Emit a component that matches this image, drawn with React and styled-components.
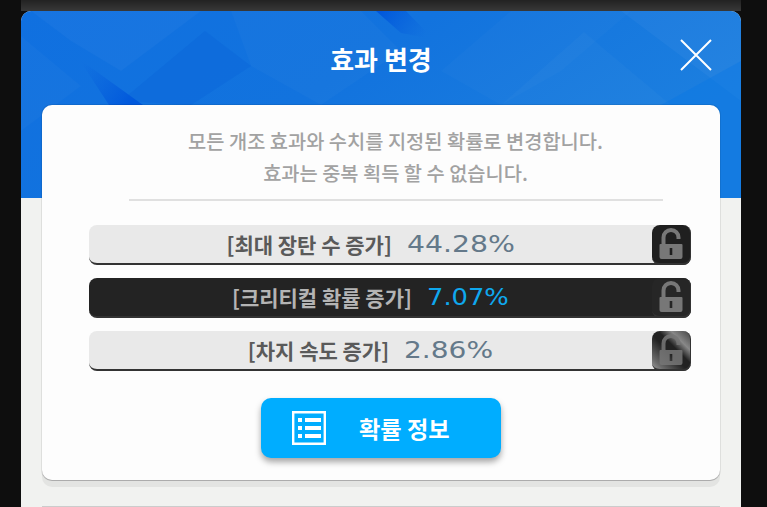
import React from 'react';
import styled, { createGlobalStyle } from 'styled-components';

const rows = [
  { id: 1, label: '[최대 장탄 수 증가]', value: '44.28%', stretch: 1.23, pad: 20 },
  { id: 2, label: '[크리티컬 확률 증가]', value: '7.07%', stretch: 1.12, pad: 9, dark: true },
  { id: 3, label: '[차지 속도 증가]', value: '2.86%', stretch: 1.22, pad: 16, shine: true },
];

function LockIcon() {
  return (
    <svg width="26" height="32" viewBox="0 0 26 32">
      <path d="M5.5 16V9.5a7.5 7.5 0 0 1 15 0v1.5" fill="none" stroke="#777" strokeWidth="4" />
      <path fillRule="evenodd" fill="#777" d="M2.5 16h21a1 1 0 0 1 1 1v12a2 2 0 0 1-2 2h-19a2 2 0 0 1-2-2V17a1 1 0 0 1 1-1zM11.7 20v7h2.6v-7z" />
    </svg>
  );
}

function ListIcon() {
  return (
    <svg width="36" height="36" viewBox="0 0 36 36" fill="#fff">
      <path fillRule="evenodd" d="M1 1h34v34H1zM3.4 3.4v29.2h29.2V3.4z" />
      <rect x="7" y="8" width="4" height="4" />
      <rect x="14" y="8" width="16" height="4" />
      <rect x="7" y="16" width="4" height="4" />
      <rect x="14" y="16" width="16" height="4" />
      <rect x="7" y="24" width="4" height="4" />
      <rect x="14" y="24" width="16" height="4" />
    </svg>
  );
}

function HeaderArt() {
  return (
    <ArtSvg width="720" height="187" viewBox="0 0 720 187">
      <defs>
        <linearGradient id="base" x1="0" y1="0" x2="1" y2="0.4">
          <stop offset="0" stopColor="#1070e0" />
          <stop offset="0.5" stopColor="#1273de" />
          <stop offset="1" stopColor="#1c7fdf" />
        </linearGradient>
        <linearGradient id="streakLeft" gradientUnits="userSpaceOnUse" x1="62" y1="50" x2="112" y2="90">
          <stop offset="0" stopColor="#0a62dc" stopOpacity="0" />
          <stop offset="1" stopColor="#0058dc" />
        </linearGradient>
        <linearGradient id="streakTop" gradientUnits="userSpaceOnUse" x1="400" y1="30" x2="360" y2="0">
          <stop offset="0" stopColor="#0a62dc" stopOpacity="0" />
          <stop offset="1" stopColor="#0058dc" />
        </linearGradient>
      </defs>
      <rect width="720" height="187" fill="url(#base)" />
      <polygon points="10,0 180,0 100,60 50,30" fill="#fff" opacity="0.03" />
      <polygon points="0,25 60,75 0,120" fill="#fff" opacity="0.025" />
      <polygon points="100,90 184,20 230,55 170,94" fill="#0a66da" opacity="0.45" />
      <polygon points="210,0 340,0 380,40 300,94 230,55" fill="#fff" opacity="0.025" />
      <polygon points="58,48 122,94 88,94" fill="url(#streakLeft)" />
      <polygon points="355,0 385,0 412,28 380,22" fill="url(#streakTop)" />
      <polygon points="420,60 490,0 610,0 540,60 480,94" fill="#fff" opacity="0.02" />
      <polygon points="480,94 563,21 650,94" fill="#fff" opacity="0.025" />
      <polygon points="600,0 720,0 720,90" fill="#fff" opacity="0.035" />
      <polygon points="640,94 720,50 720,187 700,187" fill="#0a78e4" opacity="0.45" />
    </ArtSvg>
  );
}

function App() {
  return (
    <>
      <GlobalStyle />
      <Page>
        <TopStrip />
        <Modal>
          <HeaderArt />
          <Header>
            <Title>효과 변경</Title>
            <CloseButton aria-label="닫기">
              <svg width="34" height="34" viewBox="0 0 34 34">
                <path d="M2 2l30 30M32 2L2 32" stroke="#fff" strokeWidth="2" />
              </svg>
            </CloseButton>
          </Header>
          <Card>
            <Description>
              모든 개조 효과와 수치를 지정된 확률로 변경합니다.
              <br />
              효과는 중복 획득 할 수 없습니다.
            </Description>
            <Divider />
            <RowList>
              {rows.map((row) => (
                <Row key={row.id} $dark={row.dark}>
                  <RowText>
                    <Label $dark={row.dark}>{row.label}</Label>
                    <Value $dark={row.dark} $stretch={row.stretch} $pad={row.pad}>{row.value}</Value>
                  </RowText>
                  <LockBox $dark={row.dark} $shine={row.shine}>
                    <LockIcon />
                  </LockBox>
                </Row>
              ))}
            </RowList>
            <InfoButton>
              <ListIcon />
              <span>확률 정보</span>
            </InfoButton>
          </Card>
          <NextCard />
        </Modal>
      </Page>
    </>
  );
}

const GlobalStyle = createGlobalStyle`
  html, body {
    margin: 0;
    height: 100%;
    overflow: hidden;
    background: #0e0e0e;
  }
  body {
    font-family: "Noto Sans CJK KR", "Noto Sans", sans-serif;
  }
`;

const Page = styled.div`
  width: 767px;
  height: 507px;
  overflow: hidden;
  padding: 0 26px 0 21px;
  box-sizing: border-box;
  background: #0e0e0e;
`;

const TopStrip = styled.div`
  height: 11px;
  background: linear-gradient(#222, #383838);
`;

const Modal = styled.div`
  position: relative;
  width: 720px;
  height: 540px;
  border-radius: 10px 10px 0 0;
  overflow: hidden;
  background: #f1f2f0;
`;

const ArtSvg = styled.svg`
  position: absolute;
  top: 0;
  left: 0;
`;

const Header = styled.div`
  position: relative;
  height: 94px;
  padding-top: 2px;
  box-sizing: border-box;
  display: flex;
  align-items: center;
  justify-content: center;
`;

const Title = styled.h1`
  margin: 0;
  color: #fff;
  font-size: 26px;
  font-weight: 700;
  line-height: 1;
`;

const CloseButton = styled.button`
  position: absolute;
  top: 27px;
  right: 28px;
  padding: 0;
  border: 0;
  background: none;
  display: flex;
`;

const Card = styled.div`
  position: relative;
  width: 678px;
  height: 375px;
  margin-left: 21px;
  padding-top: 20px;
  box-sizing: border-box;
  border-radius: 10px;
  background: #fdfdfd;
  box-shadow: 0 0 0 1px rgba(0, 0, 0, 0.08), 0 1px 0 0 #bbb, 0 7px 0 0 #e3e4e2;
  display: flex;
  flex-direction: column;
  align-items: center;
`;

const Description = styled.p`
  margin: 0 0 0 29px;
  color: #a2a2a2;
  font-size: 19.8px;
  font-weight: 500;
  line-height: 32px;
  white-space: nowrap;
  text-align: center;
`;

const Divider = styled.div`
  width: 534px;
  height: 2px;
  margin: 10px 0 0 30px;
  background: #e0e0e0;
`;

const RowList = styled.div`
  width: 602px;
  margin: 24px 0 0 18px;
  display: flex;
  flex-direction: column;
  gap: 13px;
`;

const Row = styled.div`
  height: 40px;
  box-sizing: border-box;
  display: flex;
  border-radius: 8px;
  background: ${(p) => (p.$dark ? '#232323' : '#e9e9e9')};
  border-bottom: 2px solid #333;
`;

const RowText = styled.div`
  flex: 1;
  display: flex;
  align-items: center;
  justify-content: center;
  gap: 15px;
`;

const Label = styled.span`
  color: ${(p) => (p.$dark ? '#b4b4b4' : '#5a5a5a')};
  font-size: 21px;
  font-weight: 700;
  line-height: 1;
`;

const Value = styled.span`
  display: inline-block;
  margin-right: ${(p) => p.$pad}px;
  color: ${(p) => (p.$dark ? '#0fa8ee' : '#64798a')};
  font-family: "DejaVu Sans", sans-serif;
  font-size: 23px;
  line-height: 1;
  transform: scaleX(${(p) => p.$stretch});
  transform-origin: left center;
`;

const LockBox = styled.div`
  width: 39px;
  height: 40px;
  flex: none;
  box-sizing: border-box;
  display: flex;
  align-items: center;
  justify-content: center;
  border-radius: 8px;
  border-right: 1px solid #333;
  border-bottom: 2px solid #333;
  background: ${(p) =>
    p.$shine
      ? 'linear-gradient(45deg, #9a9a9a 0, #6a6a6a 15%, #222 45%, #222 58%, #888 75%, #444 100%)'
      : p.$dark
        ? '#262626'
        : '#1f1f1f'};

  svg {
    opacity: ${(p) => (p.$shine ? 0.85 : 1)};
  }
`;

const InfoButton = styled.button`
  width: 240px;
  height: 60px;
  margin-top: 27px;
  padding: 0 0 0 30px;
  border: 0;
  border-radius: 10px;
  background: #00adff;
  box-shadow: 0 4px 6px rgba(0, 0, 0, 0.35);
  color: #fff;
  font-family: inherit;
  font-size: 23.2px;
  font-weight: 700;
  display: flex;
  align-items: center;
  gap: 32px;
`;

const NextCard = styled.div`
  position: relative;
  width: 678px;
  height: 40px;
  margin: 26px 0 0 21px;
  background: #e8e8e6;
  border-top: 1px solid #ccc;
`;

export default App;
